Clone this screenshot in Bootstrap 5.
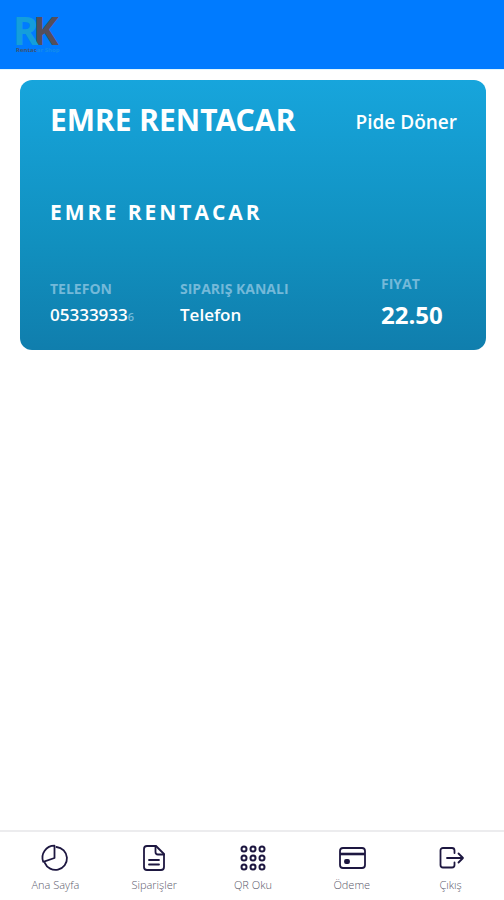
<!DOCTYPE html>
<html lang="tr">
<head>
<meta charset="utf-8">
<meta name="viewport" content="width=device-width, initial-scale=1">
<title>Emre Rentacar</title>
<link href="https://cdn.jsdelivr.net/npm/bootstrap@5.3.0/dist/css/bootstrap.min.css" rel="stylesheet">
<style>
body { font-family: "Open Sans", "Noto Sans", sans-serif; background: #fff; }
.app-header { background: #007bff; height: 70px; border-bottom: 1px solid #dff6ff; }
.brand-logo { width: 48px; height: 44px; overflow: visible; }
.app-main { padding: 10px 18px 16px 20px; }
.order-card { background: linear-gradient(180deg, #17a5dc 0%, #1190bf 60%, #107ead 100%); border-radius: 12px; min-height: 270px; padding: 20px 29px 16px 30px; }
.order-title { font-size: 30px; line-height: 40px; font-weight: 700; font-family: "Noto Sans", sans-serif; }
.order-item { font-size: 19px; line-height: 24px; font-weight: 600; }
.order-customer { font-size: 21px; line-height: 28px; font-weight: 700; letter-spacing: 3px; margin-top: 58px; }
.meta-label { font-size: 14px; line-height: 24px; font-weight: 700; color: #74b9d9; }
.meta-value { font-size: 17px; line-height: 28px; font-weight: 600; }
.meta-faded { font-size: 11px; line-height: 1; color: #74b9d9; }
.meta-phone { width: 130px; }
.meta-price { width: 76px; }
.meta-price .meta-value { font-size: 24px; line-height: 38px; font-weight: 700; }
.tab-bar { border-top: 2px solid #ececee; height: 70px; padding: 0 4px 0 6px; }
.tab-item { flex: 1 1 0; font-size: 11px; line-height: 16px; color: #5c5a6c; font-weight: 300; padding-top: 11px; }
.tab-icon { width: 30px; height: 30px; margin-bottom: 4px; fill: none; stroke: #1d1740; stroke-width: 1.8; stroke-linecap: round; stroke-linejoin: round; }
</style>
<script src="https://cdn.jsdelivr.net/npm/bootstrap@5.3.0/dist/js/bootstrap.bundle.min.js"></script>
</head>
<body class="d-flex flex-column min-vh-100">
<header class="app-header d-flex align-items-center px-3">
  <a href="#" aria-label="RK Rentacar" class="d-flex">
    <svg class="brand-logo" viewBox="0 0 48 44" font-family="Open Sans, sans-serif" font-weight="700">
      <text x="17" y="32" font-size="39" fill="#544f5b">K</text>
      <text x="-3" y="32" font-size="39" fill="#149edb">R</text>
      <text x="0" y="39" font-size="6"><tspan fill="#41536f">Rentac</tspan><tspan fill="#148cec">ar Shop</tspan></text>
    </svg>
  </a>
</header>
<main class="app-main flex-grow-1">
  <article class="order-card d-flex flex-column text-white">
    <div class="d-flex justify-content-between align-items-center">
      <h1 class="order-title mb-0">EMRE RENTACAR</h1>
      <span class="order-item pt-1">Pide Döner</span>
    </div>
    <div class="order-customer">EMRE RENTACAR</div>
    <div class="d-flex mt-auto align-items-center">
      <div class="meta-phone"><div class="meta-label">TELEFON</div><div class="meta-value">05333933<span class="meta-faded">6</span></div></div>
      <div><div class="meta-label">SIPARIŞ KANALI</div><div class="meta-value">Telefon</div></div>
      <div class="meta-price ms-auto"><div class="meta-label">FIYAT</div><div class="meta-value">22.50</div></div>
    </div>
  </article>
</main>
<nav class="tab-bar d-flex bg-white" aria-label="Menü">
  <a href="#" class="tab-item d-flex flex-column align-items-center text-decoration-none">
    <svg class="tab-icon" viewBox="0 0 30 30" aria-hidden="true"><path d="M14.500 15V2.700A12 12 0 0 0 3.200 18.800Z"/><path d="M16.500 4A11.500 11.500 0 1 1 4.800 19.800"/></svg>
    <span>Ana Sayfa</span>
  </a>
  <a href="#" class="tab-item d-flex flex-column align-items-center text-decoration-none">
    <svg class="tab-icon" viewBox="0 0 30 30" aria-hidden="true"><path d="M8 3H17L25 11V24A3 3 0 0 1 22 27H8A3 3 0 0 1 5 24V6A3 3 0 0 1 8 3Z"/><path d="M16.500 3V9A2.500 2.500 0 0 0 19 11.500H25M10 17H20M10 21.500H20"/></svg>
    <span>Siparişler</span>
  </a>
  <a href="#" class="tab-item d-flex flex-column align-items-center text-decoration-none">
    <svg class="tab-icon" viewBox="0 0 30 30" aria-hidden="true"><g stroke-width="2"><circle cx="6" cy="6" r="2.500"/><circle cx="15" cy="6" r="2.500"/><circle cx="24" cy="6" r="2.500"/><circle cx="6" cy="15" r="2.500"/><circle cx="15" cy="15" r="2.500"/><circle cx="24" cy="15" r="2.500"/><circle cx="6" cy="24" r="2.500"/><circle cx="15" cy="24" r="2.500"/><circle cx="24" cy="24" r="2.500"/></g></svg>
    <span>QR Oku</span>
  </a>
  <a href="#" class="tab-item d-flex flex-column align-items-center text-decoration-none">
    <svg class="tab-icon" viewBox="0 0 30 30" aria-hidden="true"><rect x="3" y="5" width="25" height="20" rx="3"/><path d="M3 11H28" stroke-width="2.600" stroke-linecap="butt"/><rect x="8" y="17" width="4" height="3" rx="1" fill="#1d1740"/></svg>
    <span>Ödeme</span>
  </a>
  <a href="#" class="tab-item d-flex flex-column align-items-center text-decoration-none">
    <svg class="tab-icon" viewBox="0 0 30 30" aria-hidden="true"><path d="M18.500 10V7.500A2.500 2.500 0 0 0 16 5H7A2.500 2.500 0 0 0 4.500 7.500V22A2.500 2.500 0 0 0 7 24.500H16A2.500 2.500 0 0 0 18.500 22V19.500M11 15H27M22.500 10.500L27 15L22.500 19.500"/></svg>
    <span>Çıkış</span>
  </a>
</nav>
</body>
</html>
